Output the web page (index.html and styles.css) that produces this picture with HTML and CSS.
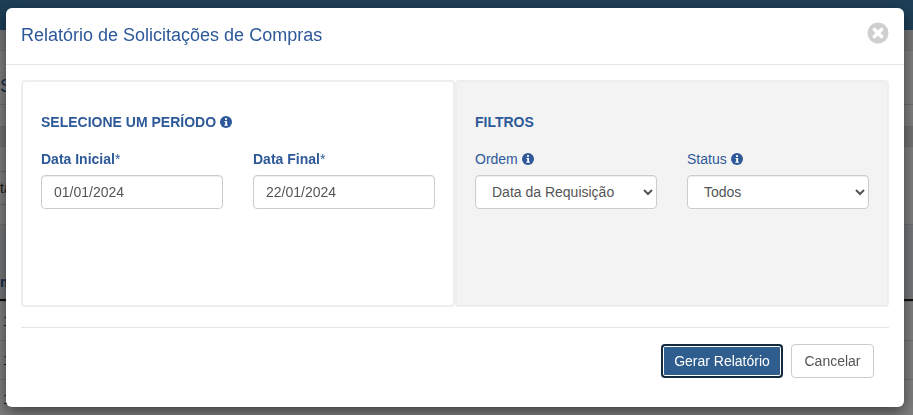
FILE: index.html
```html
<!DOCTYPE html>
<html lang="pt-BR">
<head>
<meta charset="utf-8">
<title>Relatório de Solicitações de Compras</title>
<link rel="stylesheet" href="styles.css">
</head>
<body>
<div class="page">
  <div class="topbar"></div>
  <div class="subbar"></div>
  <div class="pagetitle">S</div>
  <div class="row r1"></div>
  <div class="row r2 band"></div>
  <div class="row r3"></div>
  <div class="r4"><span class="cell">ta</span></div>
  <div class="thead-gap"></div>
  <div class="thead"><span class="cell">m</span></div>
  <div class="row r5"><span class="cell">1</span></div>
  <div class="row r6"><span class="cell">1</span></div>
  <div class="row r7"><span class="cell">1</span></div>
</div>
<div class="backdrop"></div>
<div class="modal">
  <header class="modal-header">
    <h1 class="modal-title">Relatório de Solicitações de Compras</h1>
    <button class="close" type="button" aria-label="Fechar">
      <svg viewBox="0 0 22 22" width="22" height="22"><circle cx="11" cy="11" r="10.5" fill="#cfcfcf"/><path d="M7.4 7.4l7.2 7.2M14.6 7.4l-7.2 7.2" stroke="#fff" stroke-width="3.6" stroke-linecap="round" fill="none"/></svg>
    </button>
  </header>
  <div class="modal-body">
    <section class="panel">
      <h2 class="panel-title">SELECIONE UM PERÍODO <svg class="info" viewBox="0 0 12 12"><use href="#i"/></svg></h2>
      <div class="fields">
        <div class="field">
          <label class="label strong">Data Inicial<span class="req">*</span></label>
          <input class="control" type="text" value="01/01/2024">
        </div>
        <div class="field">
          <label class="label strong">Data Final<span class="req">*</span></label>
          <input class="control" type="text" value="22/01/2024">
        </div>
      </div>
    </section>
    <section class="panel panel-gray">
      <h2 class="panel-title">FILTROS</h2>
      <div class="fields">
        <div class="field">
          <label class="label">Ordem <svg class="info" viewBox="0 0 12 12"><use href="#i"/></svg></label>
          <select class="control select"><option>Data da Requisição</option></select>
        </div>
        <div class="field">
          <label class="label">Status <svg class="info" viewBox="0 0 12 12"><use href="#i"/></svg></label>
          <select class="control select"><option>Todos</option></select>
        </div>
      </div>
    </section>
  </div>
  <footer class="modal-footer">
    <button class="btn btn-primary" type="button">Gerar Relatório</button>
    <button class="btn btn-default" type="button">Cancelar</button>
  </footer>
</div>
<svg class="defs" width="0" height="0"><defs><g id="i"><circle cx="6" cy="6" r="6" fill="currentColor"/><rect x="5" y="2.1" width="2" height="1.9" rx=".4" fill="#fff"/><path d="M4.5 5h2.6v3.7h.8v1H4.3v-1h.9V6h-.7z" fill="#fff"/></g></defs></svg>
</body>
</html>
```
FILE: styles.css
```css
* { box-sizing: border-box; }
html, body { margin: 0; height: 100%; overflow: hidden; }
body { font-family: "Liberation Sans", Arial, sans-serif; font-size: 14px; color: #555; background: #fff; }
.page { height: 415px; }
.topbar { height: 30px; background: #3c7fae; }
.subbar { height: 20px; background: #f0f0f0; }
.pagetitle { height: 54px; padding-top: 23px; font-size: 18px; line-height: 24px; color: #2d5999; border-top: 1px solid #e8e8e8; }
.row { border-top: 1px solid #ddd; color: #333; }
.r1 { height: 22px; }
.r2 { height: 20px; }
.band { background: #e6e6e6; }
.r3 { height: 25px; }
.r4 { height: 33px; padding-top: 7px; color: #333; background: linear-gradient(#ccc, #ccc) left top / 20px 1px no-repeat; }
.thead-gap { height: 20px; background: linear-gradient(#ccc, #ccc) left top / 20px 1px no-repeat; }
.cell { display: block; line-height: 20px; white-space: nowrap; }
.thead { height: 77px; padding-top: 47px; border-top: 1px solid #ddd; border-bottom: 2px solid #222; font-weight: 700; color: #2d5999; background: #eaeef2; }
.r5, .r6, .r7 { height: 39px; padding-top: 9px; padding-left: 3px; }
.backdrop { position: fixed; inset: 0; background: rgba(0, 0, 0, .5); }
.modal { position: absolute; left: 6px; top: 8px; width: 898px; height: 399px; background: #fff; border-radius: 6px; box-shadow: 0 5px 15px rgba(0, 0, 0, .5); display: flex; flex-direction: column; padding: 0 15px; }
.modal-header { display: flex; align-items: flex-start; justify-content: space-between; height: 57px; margin: 0 -15px; padding: 0 15px; border-bottom: 1px solid #e5e5e5; }
.modal-title { margin: 0; padding-top: 15px; font-size: 18px; line-height: 24px; font-weight: 400; color: #2d5999; }
.close { border: 0; background: none; padding: 0; margin: 14px 0 0; width: 22px; height: 22px; }
.close svg { display: block; }
.modal-body { display: flex; margin-top: 15px; height: 227px; }
.panel { width: 434px; height: 227px; border: 2px solid #eee; border-radius: 4px; padding: 30px 18px 0; }
.panel-gray { background: #f3f3f3; }
.panel-title { margin: 0 0 17px; font-size: 14px; line-height: 20px; font-weight: 700; color: #2d5999; }
.fields { display: flex; gap: 30px; }
.field { width: 182px; }
.label { display: block; height: 20px; margin-bottom: 6px; line-height: 20px; color: #2d5999; font-size: 14px; }
.strong { font-weight: 700; }
.req { font-weight: 400; }
.info { width: 12px; height: 12px; vertical-align: -1px; color: #2d5999; }
.control { display: block; width: 182px; height: 34px; border: 1px solid #ccc; border-radius: 4px; background: #fff; padding: 6px 12px; font-family: "Liberation Sans", Arial, sans-serif; font-size: 14px; color: #555; box-shadow: inset 0 1px 1px rgba(0, 0, 0, .075); }
.modal-footer { display: flex; justify-content: flex-end; gap: 8px; margin-top: 20px; padding: 16px 15px 0 0; border-top: 1px solid #e5e5e5; height: 60px; }
.btn { height: 34px; border-radius: 4px; font-family: "Liberation Sans", Arial, sans-serif; font-size: 14px; padding: 6px 10px; white-space: nowrap; }
.btn-primary { width: 122px; background: #2f5d8e; color: #fff; border: 2px solid #122b40; box-shadow: inset 0 0 0 1px #fff; }
.btn-default { width: 83px; background: #fff; color: #555; border: 1px solid #ccc; }
.defs { position: absolute; }
```
